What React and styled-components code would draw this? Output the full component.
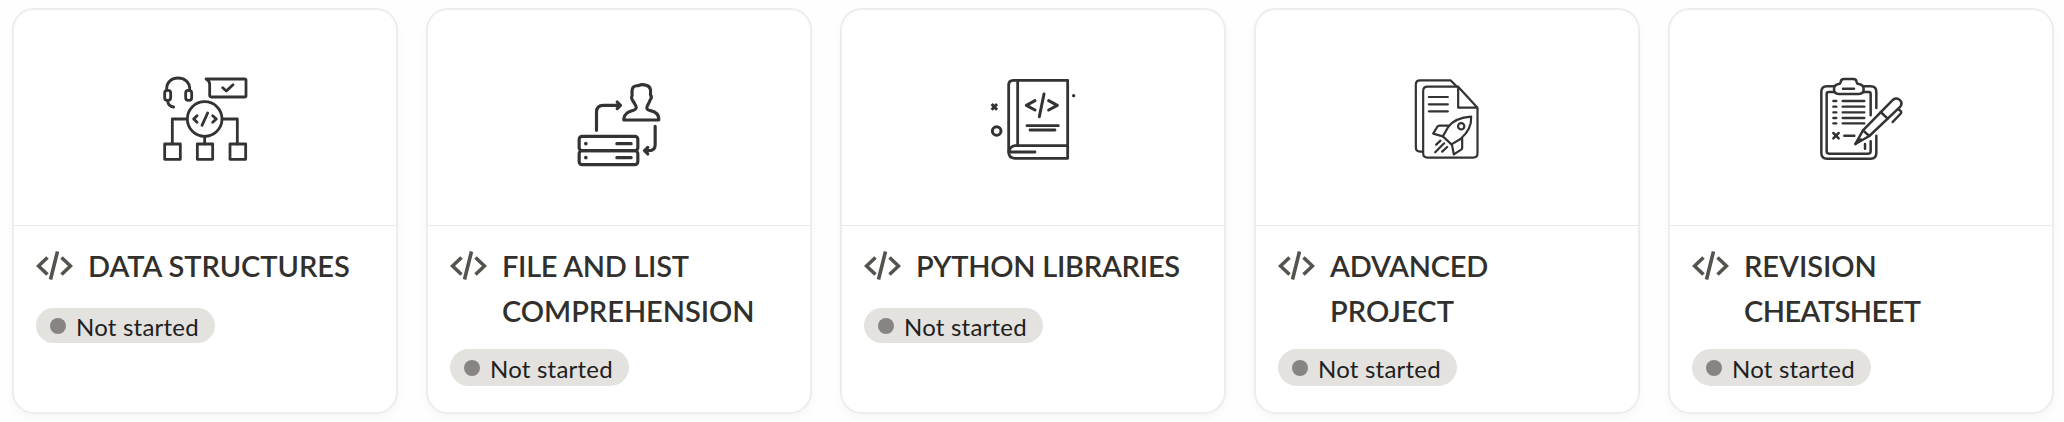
import React from 'react';
import styled, { createGlobalStyle } from 'styled-components';

const GlobalStyle = createGlobalStyle`
  * {
    box-sizing: border-box;
  }

  body {
    margin: 0;
    background: #fefefe;
    font-family: Lato, "Open Sans", sans-serif;
  }
`;

const CardGrid = styled.div`
  width: 2064px;
  height: 422px;
  padding: 8px 10px 0 12px;
  display: grid;
  grid-template-columns: repeat(5, 386px);
  justify-content: space-between;
  align-items: start;
  overflow: hidden;
`;

const Card = styled.div`
  height: 406px;
  border: 2px solid #ededec;
  border-radius: 22px;
  background: #ffffff;
  box-shadow: 0 4px 8px rgba(15, 15, 15, 0.035);
  overflow: hidden;
`;

const Cover = styled.div`
  height: 216px;
  padding-top: 1px;
  border-bottom: 1px solid #e9e9e8;
  display: flex;
  align-items: center;
  justify-content: center;
`;

const Art = styled.svg`
  width: 110px;
  height: 105px;
  fill: none;
  stroke: #333333;
  stroke-width: ${props => props.$stroke || 8.4};
  stroke-linecap: round;
  stroke-linejoin: round;
`;

const Body = styled.div`
  padding: 17px 22px 0;
`;

const TitleRow = styled.div`
  display: flex;
  align-items: flex-start;
`;

const CodeIcon = styled.svg`
  width: 37px;
  height: 30px;
  margin: 8px 15px 0 0;
  flex: none;
  fill: none;
  stroke: #55534e;
  stroke-width: 3.6;
`;

const Title = styled.div`
  font-size: 29px;
  font-weight: 600;
  line-height: 45px;
  color: #32302c;
  white-space: nowrap;
`;

const Line = styled.div`
  letter-spacing: ${props => props.$tracking}px;
`;

const Status = styled.div`
  width: 179px;
  height: ${props => (props.$tall ? 37 : 35)}px;
  margin-top: ${props => (props.$tall ? 16 : 20)}px;
  padding: 0 0 0 14px;
  border-radius: 19px;
  background: #e3e2df;
  display: flex;
  align-items: center;
  gap: 10px;
`;

const Dot = styled.span`
  width: 16px;
  height: 16px;
  border-radius: 50%;
  background: #868583;
`;

const StatusText = styled.span`
  font-size: 24px;
  line-height: 34px;
  letter-spacing: 0.22px;
  padding-top: 2px;
  color: #20201e;
  white-space: nowrap;
`;

const Structures = () => (
  <Art viewBox="0 0 330 315">
    <path d="M50 73V68C50 48 65 36 84 36S119 48 119 68V73" />
    <rect x="44" y="73" width="18" height="30" rx="8" />
    <rect x="107" y="73" width="18" height="30" rx="8" />
    <path d="M53 105C54 116 60 122 71 123" />
    <path d="M168 39H284Q288 39 288 43V89Q288 93 284 93H184Q179 93 179 88V55Q179 45 168 39Z" />
    <path d="M218 65L229 75L249 56" />
    <circle cx="164" cy="159" r="52" />
    <path d="M141 149L131 159L141 169M173 141L156 178M188 149L199 159L188 169" />
    <path d="M111 159H67V234M217 159H262V234M164 212V234" />
    <rect x="44" y="234" width="47" height="46" />
    <rect x="142" y="234" width="46" height="46" />
    <rect x="240" y="234" width="47" height="46" />
  </Art>
);

const Server = () => (
  <Art viewBox="-1.5 -15 330 315" $stroke={9.5}>
    <rect x="44" y="196" width="176" height="43" rx="9" />
    <rect x="44" y="239" width="176" height="42" rx="9" />
    <path d="M64 218V218.1M64 260V260.1" strokeWidth="11" />
    <path d="M157 218H200M157 260H200" />
    <path d="M96 178V124Q96 103 117 103H168M158 93L168 103L158 113" />
    <path d="M272 166V221Q272 239 253 239H241M250 229L240 239L250 249" />
    <path d="M178 147V143C179 127 195 121 207 118C217 115 217 108 212 101C208 95 207 91 203 86C199 80 202 76 203 73C202 61 201 53 207 48C211 43 217 45 222 44C229 40 239 41 245 43C258 45 260 57 258 71C263 77 259 85 256 89C254 96 250 101 248 106C244 114 249 117 258 119C272 122 284 131 283 147Z" />
  </Art>
);

const Book = () => (
  <Art viewBox="-6 0 330 315">
    <path d="M263 43H100Q86 43 86 58V256Q86 277 104 277H263Z" />
    <path d="M113 43V239M263 239H105Q90 241 86 258H165" />
    <path d="M165 104L139 118L165 132M192 84L178 152M206 104L232 118L206 132" strokeWidth="9" />
    <path d="M141 179H235M150 192H225" />
    <path d="M35 114L51 131M51 114L35 131" strokeWidth="9" strokeLinecap="butt" />
    <circle cx="50" cy="195" r="13" strokeWidth="9" />
    <path d="M281 89V89.1" strokeWidth="10" />
  </Art>
);

const Rocket = () => (
  <Art viewBox="-23.5 0 330 315" $stroke={6.6}>
    <path d="M69 257H61Q48 257 48 244V56Q48 43 61 43H152L170 61" />
    <path d="M175 62H83Q70 62 70 75V262Q70 275 83 275H220Q233 275 233 262V125L175 62V125H233" />
    <path d="M87 93H144M87 115H144M87 136H144" />
    <path d="M214 152C181 154 157 167 145 183L129 211L155 235L182 219C202 202 216 183 214 152Z" />
    <circle cx="184" cy="181" r="9.5" />
    <path d="M145 179H119Q115 179 112 183L100 203L129 211M187 217V246Q187 249 184 251L162 265L156 235" />
    <path d="M122 224L109 236M133 232L106 259M142 243L127 257" />
  </Art>
);

const Clipboard = () => (
  <Art viewBox="3 0 330 315" $stroke={7.5}>
    <path d="M86 61H66Q49 61 49 78V261Q49 278 66 278H197Q214 278 214 261V209M214 126V78Q214 61 197 61H176" />
    <path d="M86 78H71Q65 78 65 84V256Q65 263 72 263H190Q197 263 197 256V226M197 148V84Q197 78 191 78H176" />
    <path d="M101 84Q87 84 87 70Q87 56 101 54Q106 54 107 48Q108 39 117 39H145Q154 39 155 48Q156 54 161 54Q176 56 176 70Q176 84 161 84Z" />
    <path d="M114 68H147" />
    <path d="M85 105H94M113 105H178M85 122H94M113 122H178M85 139H94M113 139H178M85 156H94M113 156H178M85 172H94M113 172H178" strokeWidth="7" />
    <path d="M85 201L101 217M101 201L85 217M118 209H148M180 234V248" />
    <path d="M151 234L174 193L262 103C275 89 297 105 286 122L193 210Z" />
    <path d="M174 193L193 210M227 138L248 158M151 234L167 220" />
    <path d="M279 129L286 134Q291 138 286 144L263 168" />
  </Art>
);

// each title line carries its own letter spacing
const cards = [
  { art: Structures, lines: [['DATA STRUCTURES', -0.05]] },
  { art: Server, lines: [['FILE AND LIST', -0.3], ['COMPREHENSION', -0.05]] },
  { art: Book, lines: [['PYTHON LIBRARIES', -0.25]] },
  { art: Rocket, lines: [['ADVANCED', -0.2], ['PROJECT', 0.1]] },
  { art: Clipboard, lines: [['REVISION', -0.05], ['CHEATSHEET', -0.55]] },
];

const CourseCard = ({ art: Picture, lines }) => (
  <Card>
    <Cover>
      <Picture />
    </Cover>
    <Body>
      <TitleRow>
        <CodeIcon viewBox="0 0 37 30">
          <path d="M11.5 6.5L2.5 15L11.5 23.5M21.5 0.5L14.5 28.5M25.5 6.5L34.5 15L25.5 23.5" />
        </CodeIcon>
        <Title>
          {lines.map(([text, tracking]) => (
            <Line key={text} $tracking={tracking}>{text}</Line>
          ))}
        </Title>
      </TitleRow>
      <Status $tall={lines.length > 1}>
        <Dot />
        <StatusText>Not started</StatusText>
      </Status>
    </Body>
  </Card>
);

const App = () => (
  <>
    <GlobalStyle />
    <CardGrid>
      {cards.map(card => (
        <CourseCard key={card.lines[0][0]} {...card} />
      ))}
    </CardGrid>
  </>
);

export default App;
